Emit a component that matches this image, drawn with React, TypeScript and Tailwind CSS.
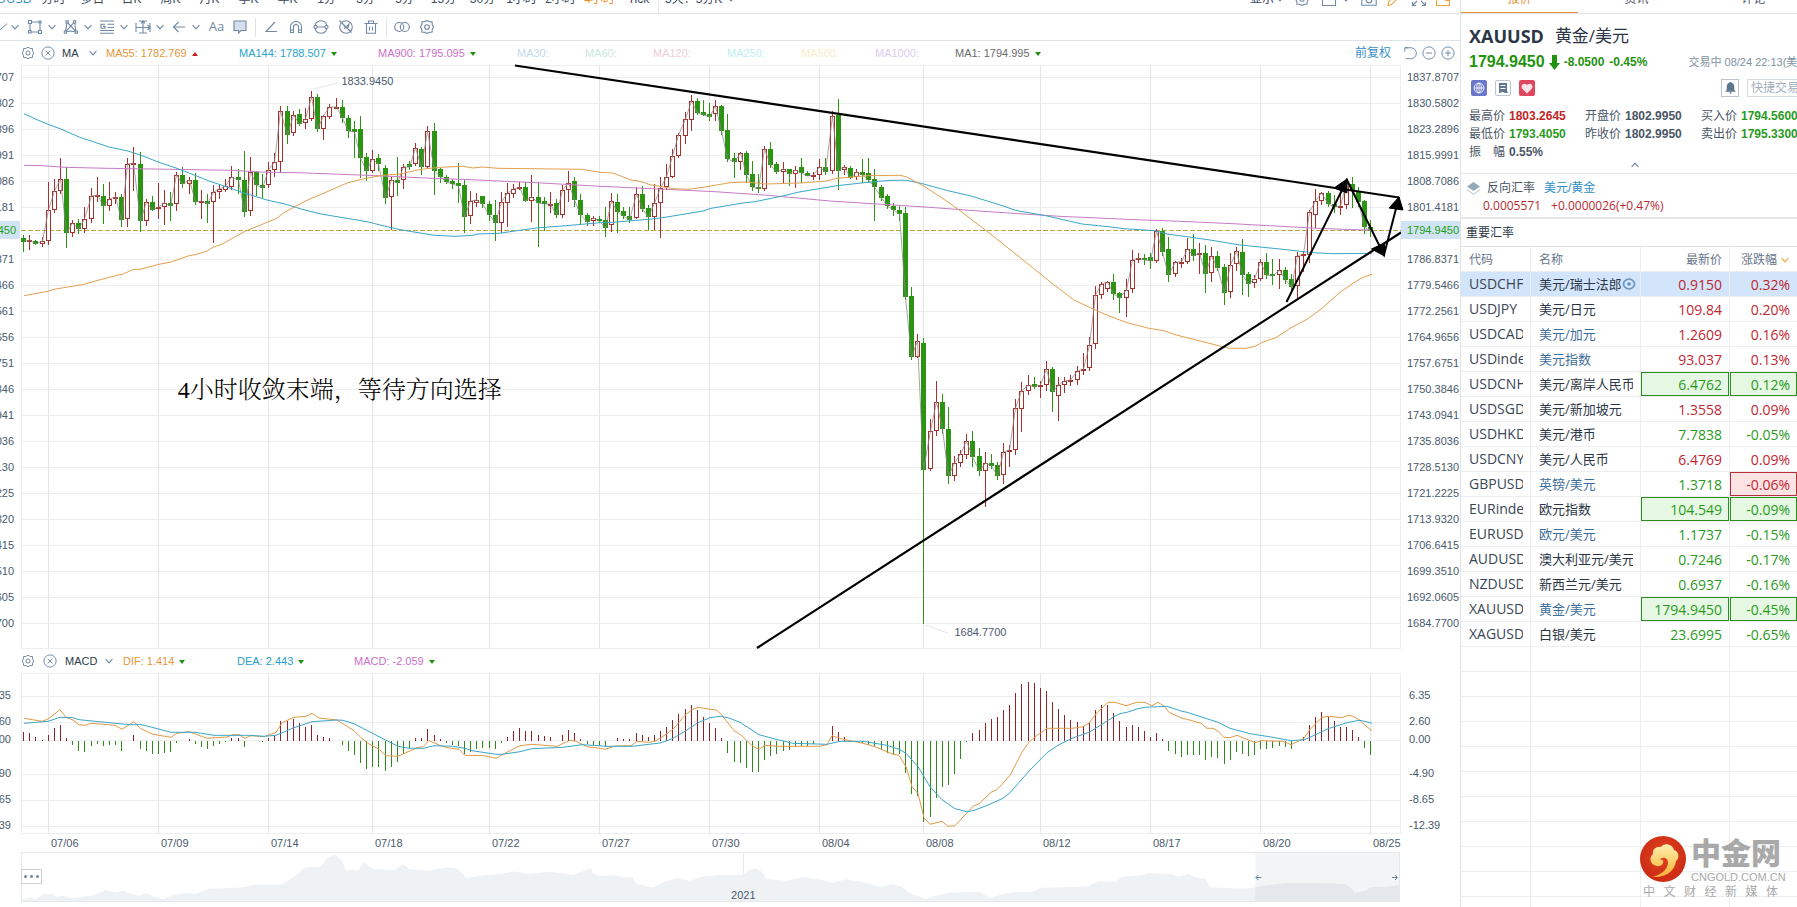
import React from "react";

/* ------------------------------------------------------------------ */
/* Chart data                                                          */
/* ------------------------------------------------------------------ */

// Each candle: direction (R rising, G falling), then high, body top, body bottom, low
// in thirds of a chart unit, measured downwards.
const CANDLES = `
G705,713,725,755 R706,720,727,750 G721,724,731,735 R711,724,731,740 R546,631,724,735 R536,573,631,639
R474,538,573,583 G502,538,700,743 R660,670,700,712 G657,670,686,703 R621,657,686,698 R563,589,658,669
R531,586,592,605 G553,588,617,671 R546,596,617,632 R575,592,598,613 G583,591,659,681 R474,493,658,681
R441,490,495,572 G455,492,664,695 R597,607,664,677 G589,606,629,632 R548,622,628,656 R570,610,622,674
G576,610,617,662 R516,526,613,632 G502,526,551,563 R532,541,553,583 G520,540,605,614 R570,602,607,656
G583,603,611,668 R556,577,607,728 R556,566,577,598 R537,558,571,577 R499,532,560,570 G507,532,541,581
G454,540,635,651 R472,515,632,647 G512,515,554,589 G523,554,563,594 R487,511,556,563 R458,487,511,530
R318,334,485,516 G318,334,404,431 R334,346,400,407 G327,343,371,377 R325,358,370,387 R273,292,358,362
G283,290,388,395 R344,349,388,419 R313,322,350,358 R294,321,323,328 G299,321,353,370 G346,353,392,413
G363,388,395,473 G348,388,473,533 G459,472,512,542 R450,478,514,520 G463,475,492,512 G495,503,594,613
R532,541,590,691 G471,541,548,589 R493,502,541,568 G483,492,500,510 R430,445,493,498 G442,448,500,524
R378,394,500,507 G369,393,512,585 G503,507,530,550 G524,530,545,551 G538,544,552,568 G489,550,557,608
G541,555,650,698 R573,604,647,672 R578,601,608,620 G589,589,612,624 G604,612,646,662 G600,645,669,722
R577,607,670,700 R548,580,610,681 R551,566,583,595 R547,562,563,570 G545,561,602,605 R525,590,602,665
G545,591,608,740 G592,603,612,692 R577,613,619,640 G597,610,645,655 R556,569,644,655 R513,548,569,605
G530,544,601,620 G583,601,644,673 G640,644,665,678 R649,655,664,677 G648,656,664,668 G622,660,683,711
R578,604,676,695 G582,605,635,699 G622,634,647,656 G620,647,660,669 R560,583,654,658 G559,583,626,635
G616,625,650,690 R553,610,650,691 R531,565,610,714 R493,532,560,571 R448,469,532,535 R400,405,469,475
R336,358,409,431 R286,304,361,393 G295,303,339,344 G300,337,344,347 G309,343,350,362 R300,319,343,362
G316,319,392,406 G342,391,476,485 G459,475,485,533 R457,460,487,510 G452,459,524,548 G484,522,562,572
G522,560,567,578 R438,448,566,574 G426,447,494,504 G486,492,517,523 R486,508,517,548 G506,508,521,557
R498,510,521,563 G475,502,520,548 G514,519,527,529 R516,525,530,540 R478,502,525,541 G475,502,515,524
R334,349,514,522 G297,346,512,570 R494,502,509,524 G499,503,533,538 R507,517,532,540 G478,517,524,549
G474,520,540,548 G507,538,562,662 G556,562,594,604 G583,588,619,627 G610,617,631,648 G617,630,641,663
G620,640,890,900 G862,888,1070,1080 R1001,1024,1070,1074 G1014,1029,1409,1871 R1257,1294,1408,1413
R1143,1207,1294,1307 G1182,1207,1286,1302 G1221,1287,1427,1452 R1368,1390,1427,1443 R1350,1363,1390,1400
R1302,1324,1366,1376 G1293,1323,1370,1400 G1344,1368,1412,1427 R1356,1390,1412,1521 G1362,1389,1397,1406
G1387,1395,1427,1440 R1329,1357,1426,1452 R1335,1351,1357,1400 R1198,1225,1351,1364 R1147,1174,1228,1295
R1125,1156,1174,1184 G1131,1153,1160,1167 R1144,1156,1161,1194 R1083,1108,1156,1174 G1101,1108,1177,1235
R1130,1156,1187,1262 R1130,1144,1156,1178 R1125,1141,1146,1157 R1098,1114,1141,1156 R1058,1108,1114,1124
R1012,1036,1105,1112 R858,886,1033,1046 R846,853,886,898 R844,847,868,877 G823,847,881,899 G876,880,895,938
R836,871,895,950 R750,780,868,880 R759,774,780,790 G762,775,780,794 G758,771,784,808 R688,693,784,788
G684,694,755,768 G710,748,825,846 R783,787,823,830 R773,786,793,805 R715,748,787,793 G702,747,767,782
R730,760,766,822 G736,760,822,880 R740,767,820,847 G754,767,803,812 G792,801,878,914 R760,796,877,895
R742,754,793,812 G717,757,825,885 G815,822,852,890 R825,838,850,865 R778,787,838,842 G760,787,825,838
G777,822,828,856 R778,811,826,868 G801,811,839,852 G823,838,860,875 R756,769,859,895 R753,763,769,815
R631,637,765,790 R568,604,646,684 R575,580,604,615 G574,580,613,622 G586,612,620,640 R586,617,622,645
R535,548,616,627 G531,552,570,623 G560,572,605,622 G600,603,682,702 G660,680,692,711`
  .trim()
  .split(/\s+/);

const MA55 =
  "24,887 48,874 54,868 84,853 98,841 117,826 122,823 134,808 140,808 159,793 171,786 189,767 195,764 207,753 214,740 221,734 245,694 276,656 285,636 306,602 325,578 337,562 348,548 364,536 383,526 400,522 421,508 440,502 463,499 473,504 482,501 498,505 582,508 600,517 613,519 631,540 640,544 650,554 673,566 688,568 703,562 730,548 747,546 765,552 801,549 826,543 837,535 868,527 900,526 906,530 925,560 944,598 960,632 987,694 1021,775 1052,850 1074,900 1095,930 1111,950 1128,969 1149,985 1164,992 1175,1004 1191,1016 1212,1032 1229,1045 1246,1045 1255,1039 1263,1026 1276,1013 1290,985 1307,958 1320,930 1340,877 1353,850 1363,832 1372,823";
const MA144 =
  "24,341 36,358 48,373 60,386 80,412 109,441 128,453 142,467 159,487 176,504 195,526 209,543 222,556 245,580 268,601 285,612 302,628 321,642 367,665 387,680 402,690 434,706 455,709 473,706 478,702 499,700 536,684 574,675 600,668 613,667 652,657 665,652 703,633 711,625 745,608 755,605 784,587 799,576 837,557 868,547 891,541 906,541 921,550 948,572 971,588 998,613 1017,632 1044,646 1059,656 1082,672 1109,680 1124,686 1155,692 1167,702 1187,710 1210,720 1240,735 1280,747 1313,758 1333,761 1372,760";
const MA900 =
  "24,496 42,497 65,502 107,505 153,507 230,511 268,517 298,518 367,526 398,530 432,535 471,539 536,548 600,559 665,568 715,575 768,586 830,603 925,621 983,634 1059,649 1136,659 1180,664 1233,671 1280,679 1317,685 1353,689 1372,690";

const DIF =
  "24,235 42,244 48,237 60,209 66,232 73,240 79,254 85,256 91,250 115,256 122,268 134,245 140,265 153,283 171,292 177,280 189,275 207,295 227,291 233,284 239,284 245,295 251,287 264,290 276,277 282,248 294,232 306,229 312,220 319,234 337,240 354,272 361,293 368,310 379,328 386,347 398,349 409,334 417,323 423,320 429,302 440,316 447,323 459,328 465,346 484,347 496,355 508,335 520,317 532,313 557,319 570,301 576,304 587,320 600,325 605,328 615,318 631,317 637,304 649,307 655,304 661,293 673,268 685,226 692,209 698,202 717,211 722,226 734,272 740,283 746,299 752,317 759,328 765,316 778,319 820,319 827,314 832,287 845,299 863,310 875,320 893,343 899,346 906,380 912,440 918,461 924,533 930,553 942,544 948,559 955,557 973,499 979,491 991,457 997,449 1010,406 1022,337 1028,310 1034,293 1047,265 1072,265 1082,261 1089,250 1097,218 1108,187 1115,187 1126,197 1137,187 1145,187 1152,197 1158,187 1164,198 1169,217 1182,235 1187,238 1201,250 1207,265 1213,265 1218,274 1224,292 1230,293 1237,286 1255,308 1261,302 1283,304 1291,314 1304,295 1310,268 1322,232 1328,229 1342,233 1348,226 1353,229 1359,239 1365,256 1372,272";
const DEA =
  "24,250 48,244 60,232 73,233 79,239 115,250 130,254 142,254 171,277 195,277 214,286 249,286 264,289 276,286 294,263 312,245 337,240 343,241 354,251 379,290 398,319 409,325 423,325 434,317 453,319 465,325 472,332 496,343 502,343 520,335 532,326 563,322 582,314 600,317 605,319 632,319 660,309 667,302 673,295 685,274 698,248 710,233 720,229 728,233 740,247 759,284 780,301 793,310 827,313 840,304 863,304 887,316 899,328 906,340 918,380 930,440 942,479 955,506 967,515 973,512 985,499 1003,475 1010,458 1028,397 1034,378 1047,338 1059,314 1072,295 1089,277 1102,253 1115,228 1120,221 1127,217 1138,206 1145,202 1167,199 1182,214 1187,217 1218,247 1230,265 1250,281 1273,292 1291,302 1304,299 1310,292 1328,266 1347,248 1359,241 1365,244 1372,250";
const BARS = [
  275, 280, 290, 299, 284, 265, 254, 295, 314, 332, 335, 317, 311, 317, 314, 315, 332, 302, 286, 326, 332, 341, 341, 338,
  335, 308, 302, 297, 311, 320, 326, 317, 311, 305, 295, 295, 320, 302, 302, 305, 295, 287, 243, 243, 237, 250, 260, 254,
  284, 292, 295, 302, 314, 332, 344, 368, 386, 380, 380, 392, 380, 365, 341, 323, 295, 295, 268, 284, 298, 308, 314, 319,
  341, 335, 326, 323, 323, 326, 308, 290, 274, 265, 274, 274, 284, 287, 290, 302, 286, 271, 280, 298, 311, 317, 317, 320,
  302, 295, 298, 298, 280, 284, 292, 286, 274, 262, 241, 223, 208, 196, 211, 232, 250, 265, 295, 338, 365, 368, 383, 395,
  395, 359, 347, 341, 332, 329, 320, 318, 318, 313, 302, 302, 257, 277, 290, 305, 305, 308, 314, 320, 326, 338, 341, 341,
  398, 461, 467, 545, 530, 473, 440, 434, 401, 356, 307, 280, 269, 250, 236, 232, 209, 196, 160, 133, 125, 129, 145, 154,
  187, 208, 226, 241, 247, 257, 247, 211, 196, 196, 220, 244, 262, 256, 262, 274, 290, 280, 298, 332, 341, 350, 344, 344,
  344, 359, 350, 353, 371, 359, 335, 341, 347, 344, 328, 326, 325, 318, 320, 326, 302, 290, 254, 230, 217, 230, 244, 262,
  260, 271, 290, 323, 344,
];
const OVERVIEW =
  "21,778 31,772 34,779 42,763 50,762 55,770 63,767 71,775 82,770 90,768 105,750 115,757 122,753 138,768 145,759 153,770 163,778 172,764 188,760 195,762 209,746 237,743 245,740 253,734 281,734 295,708 304,683 312,680 319,682 327,655 335,645 341,660 346,692 352,689 358,692 364,665 369,680 375,688 394,690 403,673 409,688 429,692 446,682 457,685 467,714 478,708 498,703 515,694 528,702 551,695 574,705 591,684 593,700 600,708 615,706 623,712 633,714 637,732 647,738 653,743 662,730 677,713 690,722 703,710 720,705 743,704 750,690 757,685 763,697 767,717 787,722 803,712 820,718 833,728 847,718 867,728 882,742 893,732 903,740 910,758 927,777 933,770 950,758 980,755 992,775 1000,765 1017,755 1033,757 1042,743 1067,742 1090,738 1100,724 1117,725 1123,710 1143,706 1150,700 1173,702 1180,710 1190,702 1197,712 1207,716 1212,742 1233,745 1253,745 1263,738 1290,728 1327,730 1348,733 1353,745 1357,758 1367,752 1373,742 1390,740 1401,735";

const xAt = (i: number) => Math.round(24.2 + i * 6.124) - 0.5;
const scale = (pts: string, offset: number) =>
  pts
    .split(" ")
    .map((p) => {
      const [x, y] = p.split(",").map(Number);
      return `${x},${(offset + y / 3).toFixed(1)}`;
    })
    .join(" ");

const DATES: [number, string][] = [
  [4, "07/06"],
  [22, "07/09"],
  [40, "07/14"],
  [57, "07/18"],
  [76, "07/22"],
  [94, "07/27"],
  [112, "07/30"],
  [130, "08/04"],
  [147, "08/08"],
  [166, "08/12"],
  [184, "08/17"],
  [202, "08/20"],
  [220, "08/25"],
];
const PRICES = [
  "1837.8707", "1830.5802", "1823.2896", "1815.9991", "1808.7086", "1801.4181", "", "1786.8371", "1779.5466",
  "1772.2561", "1764.9656", "1757.6751", "1750.3846", "1743.0941", "1735.8036", "1728.5130", "1721.2225",
  "1713.9320", "1706.6415", "1699.3510", "1692.0605", "1684.7700",
];
const MACD_TICKS: [number, string][] = [
  [23, "6.35"],
  [49, "2.60"],
  [67, "0.00"],
  [101, "-4.90"],
  [127, "-8.65"],
  [153, "-12.39"],
];

/* ------------------------------------------------------------------ */
/* Icons                                                               */
/* ------------------------------------------------------------------ */

type IconProps = { children: React.ReactNode; className?: string; size?: number };
function Icon({ children, className = "text-[#7189a5]", size = 16 }: IconProps) {
  return (
    <svg
      width={size}
      height={size}
      viewBox="0 0 16 16"
      fill="none"
      stroke="currentColor"
      strokeWidth="1.1"
      className={`shrink-0 ${className}`}
      aria-hidden="true"
    >
      {children}
    </svg>
  );
}
const Chevron = ({ className }: { className?: string }) => (
  <Icon size={10} className={className}>
    <path d="M2.500 5l5.500 6 5.500-6" strokeWidth="1.800" />
  </Icon>
);
const Gear = ({ size = 16 }: { size?: number }) => (
  <Icon size={size}>
    <path d="M5.600 2.800 8 1.400l2.400 1.400 2.700.1.100 2.700L14.600 8l-1.400 2.400-.1 2.700-2.700.1L8 14.600l-2.400-1.400-2.700-.1-.1-2.700L1.400 8l1.400-2.400.1-2.700z" strokeLinejoin="round" />
    <circle cx="8" cy="8" r="2.300" />
  </Icon>
);
const CloseCircle = () => (
  <Icon size={14}>
    <circle cx="8" cy="8" r="7" />
    <path d="M5.300 5.300l5.400 5.400M10.700 5.300l-5.400 5.400" />
  </Icon>
);
const Tri = ({ up = false }: { up?: boolean }) => (
  <svg width="6" height="4" viewBox="0 0 6 4" className="mt-px shrink-0" aria-hidden="true">
    {up ? <path d="M3 0l3 4H0z" fill="#c51f1f" /> : <path d="M0 0h6L3 4z" fill="#1f930f" />}
  </svg>
);

const DRAW_TOOLS: { name: string; icon: React.ReactNode }[] = [
  {
    name: "矩形",
    icon: (
      <Icon>
        <path d="M4.500 3h8.500v8.500M3 4.500V13h8.500" />
        <path d="M1.500 1.500h3v3h-3zM1.500 11.500h2.500v2.500H1.500zM11.500 11.500h3v3h-3zM12 2h2v2h-2z" fill="#fff" />
      </Icon>
    ),
  },
  {
    name: "形态",
    icon: (
      <Icon>
        <path d="M2.500 13L4 3l9 9.500L11.500 3 2.500 13l5-1 5.500 1" />
        <path d="M3 1.800h2.200V4H3zM10.500 1.800h2.200V4h-2.200zM1.300 12h2.200v2.200H1.300zM12.200 12h2.200v2.200h-2.200z" fill="#fff" />
      </Icon>
    ),
  },
  {
    name: "斐波那契",
    icon: (
      <Icon>
        <path d="M1 2h14M8.500 5.300H15M8.500 8.500H15M1 11.500h14M1 14.300h14M6 5.300H2v4h4V7.400H4" />
      </Icon>
    ),
  },
  {
    name: "测量",
    icon: (
      <Icon>
        <path d="M1 4v9M15 4v9M1 8.500h14M8 2v12M4 2h8M4 14h8M12.500 6l2.500 2.500-2.500 2.500M6 4.500L8 2l2 2.500" />
      </Icon>
    ),
  },
  {
    name: "箭头",
    icon: (
      <Icon>
        <path d="M14 8H2.500M7.500 3L2.500 8l5 5" />
      </Icon>
    ),
  },
];

const ACTION_TOOLS: { name: string; icon: React.ReactNode }[] = [
  { name: "角度", icon: <Icon><path d="M12 3L3 12.500h11" /></Icon> },
  {
    name: "磁吸",
    icon: (
      <Icon>
        <path d="M2.500 13.500V8a5.500 5.500 0 0 1 11 0v5.500H10.500V8a2.500 2.500 0 0 0-5 0v5.500zM2.500 11h3M10.500 11h3" />
      </Icon>
    ),
  },
  {
    name: "锁定",
    icon: (
      <Icon>
        <path d="M2.500 5A6.300 6.300 0 0 1 13.500 5M13.500 11A6.300 6.300 0 0 1 2.500 11M4 8h8M2.500 5v1.500M13.500 5v1.500M2.500 11V9.500M13.500 11V9.500" />
        <circle cx="2.500" cy="8" r="1.600" fill="#fff" />
        <circle cx="13.500" cy="8" r="1.600" fill="#fff" />
      </Icon>
    ),
  },
  {
    name: "隐藏",
    icon: (
      <Icon>
        <circle cx="8" cy="8" r="6.300" />
        <path d="M1.500 1.500l12 12M6 9.800L11 5l-1.200 4M5.500 6.200l3 3" />
      </Icon>
    ),
  },
  {
    name: "删除",
    icon: (
      <Icon>
        <path d="M1.500 4.500h13M5.500 4.500V2h5v2.500M3.500 4.500v9.800h9V4.500M6.500 7.500v4M9.500 7.500v4" />
      </Icon>
    ),
  },
];

/* ------------------------------------------------------------------ */
/* Header bars                                                         */
/* ------------------------------------------------------------------ */

const PERIODS = [
  "分时", "多日", "日K", "周K", "月K", "季K", "年K", "1分", "3分", "5分", "15分", "30分", "1小时", "2小时", "4小时", "Tick",
];

function PeriodBar() {
  return (
    <nav className="flex h-[14px] flex-col justify-end overflow-hidden border-b border-[#dfe3e8] text-[12px] text-[#3c4a5c]">
      <div className="flex h-[28px] shrink-0 items-center whitespace-nowrap">
        <div className="mr-[2px] flex w-[32px] shrink-0 justify-end overflow-hidden font-['Open_Sans'] text-[13px] text-[#3a8fc0]">
          <span>XAUUSD</span>
        </div>
        {PERIODS.map((p) => (
          <button key={p} type="button" className={`w-[39px] shrink-0 ${p === "4小时" ? "text-[#ee8a1d]" : ""}`}>
            {p}
          </button>
        ))}
        <div className="mr-[6px] h-full w-px bg-[#e3e6ea]" />
        <button type="button" className="flex items-center gap-1">
          5天：5分K <Chevron />
        </button>
        <div className="ml-auto flex items-center pr-[9px]">
          <button type="button" className="mr-[9px] flex items-center gap-px">
            显示 <Chevron />
          </button>
          <button type="button" aria-label="设置" className="mr-[11px]">
            <Gear />
          </button>
          <button type="button" aria-label="布局" className="mr-[10px] flex items-center gap-1">
            <Icon><path d="M1.500 1.500h13v13h-13z" /></Icon>
            <Chevron />
          </button>
          <button type="button" aria-label="截图" className="mr-[9px]">
            <Icon><path d="M.8 4h3.500L6 2h4l1.700 2h3.500v10.300H.8z" /><circle cx="8" cy="9" r="2.800" /></Icon>
          </button>
          <button type="button" aria-label="画线" className="mr-[9px]">
            <Icon className="text-[#f0a43a]"><path d="M2 14.500l.8-4L11 2l3 3-8.500 8.500z" /></Icon>
          </button>
          <button type="button" aria-label="全屏" className="mr-[8px]">
            <Icon><path d="M1.500 5V1.500H5M11 1.500h3.500V5M14.500 11v3.500H11M5 14.500H1.500V11M2 14l4-4M14 14l-4-4" /></Icon>
          </button>
          <button type="button" aria-label="侧栏">
            <Icon className="text-[#f0a43a]"><path d="M1.500 1.500h13v13h-13zM10.500 1.500v8h4" /></Icon>
          </button>
        </div>
      </div>
    </nav>
  );
}

function DrawBar() {
  return (
    <div className="flex h-[27px] items-center border-b border-[#dfe3e8]">
      <button type="button" aria-label="线段" className="flex w-[27px] items-center gap-[2px]">
        <Icon size={8}><path d="M0 14L14 1" strokeWidth="2" /></Icon>
        <Chevron />
      </button>
      <div className="flex gap-[6px]">
        {DRAW_TOOLS.map((t) => (
          <button key={t.name} type="button" aria-label={t.name} className="flex w-[30px] items-center justify-between">
            {t.icon}
            <Chevron />
          </button>
        ))}
      </div>
      <button type="button" className="ml-[2px] w-[27px] text-center font-['Open_Sans'] text-[13px] text-[#7189a5]">
        Aa
      </button>
      <button type="button" aria-label="批注" className="ml-[2px]">
        <Icon><path d="M2 2h12v9.500H9L6.500 14v-2.500H2z" fill="#d5e0ee" /></Icon>
      </button>
      <div className="mx-[7px] h-[19px] w-px bg-[#dfe3e8]" />
      <div className="flex gap-[9px]">
        {ACTION_TOOLS.map((t) => (
          <button key={t.name} type="button" aria-label={t.name}>
            {t.icon}
          </button>
        ))}
      </div>
      <div className="mx-[7px] h-[19px] w-px bg-[#dfe3e8]" />
      <div className="flex gap-[9px]">
        <button type="button" aria-label="叠加">
          <Icon><circle cx="5.200" cy="8" r="4.500" /><circle cx="10.800" cy="8" r="4.500" /></Icon>
        </button>
        <button type="button" aria-label="画线设置">
          <Gear />
        </button>
      </div>
    </div>
  );
}

const LEGEND: { text: string; cls: string; mark?: "up" | "down" }[] = [
  { text: "MA55: 1782.769", cls: "w-[133px] text-[#e8953a]", mark: "up" },
  { text: "MA144: 1788.507", cls: "w-[139px] text-[#2aa3c9]", mark: "down" },
  { text: "MA900: 1795.095", cls: "w-[139px] text-[#cc6fc9]", mark: "down" },
  { text: "MA30:", cls: "w-[68px] text-[#c3d9ee]" },
  { text: "MA60:", cls: "w-[68px] text-[#c9e8dc]" },
  { text: "MA120:", cls: "w-[74px] text-[#f0cdd2]" },
  { text: "MA250:", cls: "w-[74px] text-[#bdeef4]" },
  { text: "MA500:", cls: "w-[74px] text-[#f8edcb]" },
  { text: "MA1000:", cls: "w-[80px] text-[#dccbee]" },
  { text: "MA1: 1794.995", cls: "w-[90px] text-[#6b6b6b]", mark: "down" },
];

function MaLegend() {
  return (
    <div className="flex h-[24px] items-center pl-[21px] text-[11px] whitespace-nowrap">
      <button type="button" aria-label="MA 设置"><Gear size={14} /></button>
      <button type="button" aria-label="关闭 MA" className="ml-[6px]"><CloseCircle /></button>
      <button type="button" className="ml-[7px] flex w-[44px] items-center gap-[9px] text-[#2d3a4a]">
        MA <Chevron />
      </button>
      {LEGEND.map((l) => (
        <span key={l.text} className={`flex shrink-0 items-center gap-[5px] ${l.cls}`}>
          {l.text}
          {l.mark && <Tri up={l.mark === "up"} />}
        </span>
      ))}
      <div className="ml-auto flex items-center gap-[5px] pr-[5px]">
        <button type="button" className="mr-[7px] text-[12px] text-[#3a8fc8]">前复权</button>
        <button type="button" aria-label="重置">
          <Icon size={14}><path d="M2 2h7a6 6 0 0 1 0 12.500H3M2 2v4.500M2 2l4 .100" /></Icon>
        </button>
        <button type="button" aria-label="缩小">
          <Icon size={14}><circle cx="8" cy="8" r="7" /><path d="M4.500 8h7" /></Icon>
        </button>
        <button type="button" aria-label="放大">
          <Icon size={14}><circle cx="8" cy="8" r="7" /><path d="M4.500 8h7M8 4.500v7" /></Icon>
        </button>
      </div>
    </div>
  );
}

/* ------------------------------------------------------------------ */
/* Charts                                                              */
/* ------------------------------------------------------------------ */

function PriceAxis({ side }: { side: "left" | "right" }) {
  const left = side === "left";
  return (
    <div
      className={`relative flex shrink-0 flex-col text-[11px] text-[#4a5a6c] ${
        left ? "w-[21px] items-end overflow-hidden pr-[7px]" : "w-[59px] items-start pl-[6px]"
      }`}
    >
      {PRICES.map((p, i) => (
        <span key={i} className="-mt-px mb-px flex h-[26px] shrink-0 items-center">{p}</span>
      ))}
      <span
        className={`absolute top-[156px] flex h-[18px] items-center bg-[#d0e4f6] text-[#1f9e14] ${
          left ? "right-px justify-end pr-[4px] pl-4" : "inset-x-0 pl-[6px]"
        }`}
      >
        1794.9450
      </span>
    </div>
  );
}

function PricePlot() {
  const bodies = CANDLES.map((c, i) => {
    const up = c[0] === "R";
    const [h, t, b, l] = c.slice(1).split(",").map((n) => Math.round(Number(n) / 3));
    return { up, h, t, b: Math.max(b, t + 1), l, x: xAt(i) };
  });
  const closes = bodies.map((k) => `${k.x},${k.up ? k.t : k.b}`).join(" ");
  return (
    <div className="relative min-w-0 flex-1">
      <svg className="block h-[584px] w-full overflow-visible" viewBox="21 65 1380 584" preserveAspectRatio="none" role="img" aria-label="XAUUSD K线图">
        <g stroke="#eceeef" strokeWidth="1" shapeRendering="crispEdges">
          {PRICES.map((_, i) => (
            <path key={i} d={`M21 ${77.5 + i * 26}H1401`} />
          ))}
          <path d="M21 65.500H1401M21 648.500H1401M21.500 65V649M1400.500 65V649" />
          {DATES.map(([i]) => (
            <path key={i} d={`M${xAt(i)} 65V649`} stroke="#e3e5e7" />
          ))}
        </g>
        <path d="M21 230.500H1401" stroke="#b9a545" strokeDasharray="5 2" shapeRendering="crispEdges" />
        <g shapeRendering="crispEdges">
          {bodies.map((k, i) =>
            k.up ? (
              <g key={i} stroke="#a8302c" fill="#fff">
                <path d={`M${k.x} ${k.h}V${k.l}`} />
                <rect x={k.x - 2} y={k.t + 0.5} width="4" height={Math.max(k.b - k.t - 1, 1)} />
              </g>
            ) : (
              <g key={i} stroke="#2c9413" fill="#2c9413">
                <path d={`M${k.x} ${k.h}V${k.l}`} />
                <rect x={k.x - 2} y={k.t + 0.5} width="4" height={Math.max(k.b - k.t - 1, 1)} />
              </g>
            ),
          )}
        </g>
        <g fill="none" strokeWidth="1">
          <polyline points={closes} stroke="#8b8488" strokeOpacity=".75" />
          <polyline points={scale(MA900, 0)} stroke="#c77cc6" />
          <polyline points={scale(MA144, 0)} stroke="#3ba6c8" />
          <polyline points={scale(MA55, 0)} stroke="#e2a050" />
          <path d="M313 89l25-6M925 625l23 8" stroke="#e3e6ea" />
        </g>
        <g stroke="#000" strokeWidth="2" fill="none">
          <path d="M515 65.500L1399 197.500M757 648L1401 232.500" strokeWidth="2.200" />
          <path d="M1286.500 302L1347 180l37 75 15-58" />
        </g>
        <path d="M1347 179l-13 9 13 5zM1384.500 256l-13-7 13-6zM1399 197l-10 11 14 2z" fill="#000" stroke="#000" />
      </svg>
      <span className="absolute top-[8px] left-[23%] ml-[3px] text-[11px] text-[#4a5a6c]">1833.9450</span>
      <span className="absolute top-[559px] left-[68%] -ml-[5px] text-[11px] text-[#4a5a6c]">1684.7700</span>
      <p className="absolute top-[307px] left-[11%] ml-[5px] font-['Liberation_Serif','Noto_Serif_CJK_SC','Noto_Sans_CJK_SC',serif] text-[24px] font-light whitespace-nowrap text-black">
        4小时收敛末端，等待方向选择
      </p>
    </div>
  );
}

function MacdHeader() {
  return (
    <div className="flex h-[24px] items-center pl-[21px] text-[11px] whitespace-nowrap">
      <button type="button" aria-label="MACD 设置"><Gear size={14} /></button>
      <button type="button" aria-label="关闭 MACD" className="ml-[8px]"><CloseCircle /></button>
      <button type="button" className="ml-[8px] flex w-[58px] items-center gap-[7px] text-[#2d3a4a]">
        MACD <Chevron />
      </button>
      <span className="flex w-[114px] items-center gap-[5px] text-[#e8953a]">DIF: 1.414 <Tri /></span>
      <span className="flex w-[117px] items-center gap-[5px] text-[#2a9fc9]">DEA: 2.443 <Tri /></span>
      <span className="flex items-center gap-[5px] text-[#cc6fc9]">MACD: -2.059 <Tri /></span>
    </div>
  );
}

function MacdAxis({ side }: { side: "left" | "right" }) {
  const left = side === "left";
  return (
    <div className={`relative shrink-0 overflow-hidden text-[11px] leading-[16px] text-[#4a5a6c] ${left ? "w-[21px]" : "w-[59px]"}`}>
      {MACD_TICKS.map(([y, t]) => (
        <span key={t} className={`absolute ${left ? "right-[10px]" : "left-[8px]"}`} style={{ top: y - 9 }}>
          {t}
        </span>
      ))}
    </div>
  );
}

function MacdPlot() {
  return (
    <div className="min-w-0 flex-1">
      <svg className="block h-[161px] w-full" viewBox="21 673 1380 161" preserveAspectRatio="none" role="img" aria-label="MACD">
        <g stroke="#eceeef" shapeRendering="crispEdges">
          {MACD_TICKS.map(([y]) => (
            <path key={y} d={`M21 ${673.5 + y}H1401`} />
          ))}
          <path d="M21 673.500H1401M21 833.500H1401M21.500 673V834M1400.500 673V834" />
          {DATES.map(([i]) => (
            <path key={i} d={`M${xAt(i)} 673V834`} stroke="#e3e5e7" />
          ))}
        </g>
        <g shapeRendering="crispEdges">
          {BARS.map((v, i) => (
            <path key={i} d={`M${xAt(i)} 740.500V${640 + v / 3}`} stroke={v < 302 ? "#8f2328" : "#2f8a1c"} />
          ))}
        </g>
        <polyline points={scale(DIF, 640)} fill="none" stroke="#e29a48" />
        <polyline points={scale(DEA, 640)} fill="none" stroke="#3ba6c8" />
      </svg>
    </div>
  );
}

function DateAxis() {
  return (
    <div className="relative mr-[59px] ml-[21px] h-[18px] text-[11px] leading-[18px] text-[#4a5a6c]">
      {DATES.map(([i, d]) => (
        <span key={d} className="absolute top-0 pl-[3px]" style={{ left: `${((xAt(i) - 21.5) / 1380) * 100}%` }}>
          {d}
        </span>
      ))}
    </div>
  );
}

function Overview() {
  return (
    <div className="relative mr-[60px] ml-[21px] border border-[#e6e8eb]">
      <svg className="block h-[48px] w-full" viewBox="21 853 1380 48" preserveAspectRatio="none" aria-hidden="true">
        <path d="M744 853V901" stroke="#e6e8eb" />
        <polygon points={`21,902 ${scale(OVERVIEW, 640)} 1401,902`} fill="#eff2f5" />
        <rect x="1257" y="853" width="144" height="48" fill="#8794a3" fillOpacity=".1" />
        <path d="M1263 877.500h-5m2-2.500l-2.500 2.500 2.500 2.500M1394 877.500h5m-2-2.500l2.500 2.500-2.500 2.500" fill="none" stroke="#5f7f9f" />
      </svg>
      <span className="absolute -bottom-[2px] left-[52%] -ml-[7px] text-[11px] text-[#4a5a6c]">2021</span>
      <button
        type="button"
        aria-label="更多"
        className="absolute top-[16px] -left-px flex h-[15px] w-[21px] items-center justify-center gap-[3px] border border-[#cdd2d8] bg-white"
      >
        <i className="size-[3px] rounded-full bg-[#75879a]" />
        <i className="size-[3px] rounded-full bg-[#75879a]" />
        <i className="size-[3px] rounded-full bg-[#75879a]" />
      </button>
    </div>
  );
}

/* ------------------------------------------------------------------ */
/* Quote panel                                                         */
/* ------------------------------------------------------------------ */

const GREEN = "text-[#2a9a1e]";
const RED = "text-[#bf2630]";

const STATS: [string, string, string][] = [
  ["最高价", "1803.2645", "text-[#c02626]"],
  ["开盘价", "1802.9950", "text-[#4a5666]"],
  ["买入价", "1794.5600", GREEN],
  ["最低价", "1793.4050", GREEN],
  ["昨收价", "1802.9950", "text-[#4a5666]"],
  ["卖出价", "1795.3300", GREEN],
  ["振　幅", "0.55%", "text-[#4a5666]"],
];

type Row = { code: string; name: string; link?: boolean; price: string; pc: "r" | "g"; chg: string; cc: "r" | "g"; pb?: boolean; cb?: boolean };
const ROWS: Row[] = [
  { code: "USDCHF", name: "美元/瑞士法郎", price: "0.9150", pc: "r", chg: "0.32%", cc: "r" },
  { code: "USDJPY", name: "美元/日元", price: "109.84", pc: "r", chg: "0.20%", cc: "r" },
  { code: "USDCAD", name: "美元/加元", link: true, price: "1.2609", pc: "r", chg: "0.16%", cc: "r" },
  { code: "USDindex", name: "美元指数", link: true, price: "93.037", pc: "r", chg: "0.13%", cc: "r" },
  { code: "USDCNH", name: "美元/离岸人民币", price: "6.4762", pc: "g", chg: "0.12%", cc: "g", pb: true, cb: true },
  { code: "USDSGD", name: "美元/新加坡元", price: "1.3558", pc: "r", chg: "0.09%", cc: "r" },
  { code: "USDHKD", name: "美元/港币", price: "7.7838", pc: "g", chg: "-0.05%", cc: "g" },
  { code: "USDCNY", name: "美元/人民币", price: "6.4769", pc: "r", chg: "0.09%", cc: "r" },
  { code: "GBPUSD", name: "英镑/美元", link: true, price: "1.3718", pc: "g", chg: "-0.06%", cc: "r", cb: true },
  { code: "EURindex", name: "欧元指数", price: "104.549", pc: "g", chg: "-0.09%", cc: "g", pb: true, cb: true },
  { code: "EURUSD", name: "欧元/美元", link: true, price: "1.1737", pc: "g", chg: "-0.15%", cc: "g" },
  { code: "AUDUSD", name: "澳大利亚元/美元", price: "0.7246", pc: "g", chg: "-0.17%", cc: "g" },
  { code: "NZDUSD", name: "新西兰元/美元", price: "0.6937", pc: "g", chg: "-0.16%", cc: "g" },
  { code: "XAUUSD", name: "黄金/美元", link: true, price: "1794.9450", pc: "g", chg: "-0.45%", cc: "g", pb: true, cb: true },
  { code: "XAGUSD", name: "白银/美元", price: "23.6995", pc: "g", chg: "-0.65%", cc: "g" },
];

function ValueCell({ text, color, boxed, last }: { text: string; color: "r" | "g"; boxed?: boolean; last?: boolean }) {
  const box = boxed
    ? color === "r"
      ? "border-[#b5323a] bg-[#fde3e4]"
      : "border-[#2a8f1e] bg-[#e6f8e3]"
    : "border-transparent";
  return (
    <td className={`border-b border-[#eceef1] p-0 ${last ? "" : "border-r"}`}>
      <div className={`flex h-[24px] items-center justify-end border pr-[6px] ${box} ${color === "r" ? RED : GREEN}`}>{text}</div>
    </td>
  );
}

function RatesTable() {
  const th = "h-[25px] border-b border-[#eceef1] p-0 pt-[2px] text-[12px] font-normal text-[#66758a]";
  return (
    <table className="w-full table-fixed border-separate border-spacing-0 font-['Open_Sans','Noto_Sans_CJK_SC',sans-serif] text-[14px]">
      <colgroup>
        <col className="w-[70px]" />
        <col className="w-[110px]" />
        <col className="w-[89px]" />
        <col />
      </colgroup>
      <thead>
        <tr>
          <th className={`${th} border-r pl-[8px] text-left`}>代码</th>
          <th className={`${th} border-r pl-[8px] text-left`}>名称</th>
          <th className={`${th} border-r pr-[7px] text-right`}>最新价</th>
          <th className={`${th} text-right`}>
            <button type="button" className="inline-flex items-center gap-[3px] pr-[7px]">
              涨跌幅 <Chevron className="text-[#f0a43a]" />
            </button>
          </th>
        </tr>
      </thead>
      <tbody>
        {ROWS.map((r, i) => (
          <tr key={r.code} className={i === 0 ? "bg-[#d2e5fb]" : ""}>
            <td className="h-[25px] border-r border-b border-[#eceef1] p-0 pr-[7px] pl-[8px] text-[#3a4656]">
              <div className="overflow-hidden leading-[24px] whitespace-nowrap">{r.code}</div>
            </td>
            <td className={`border-r border-b border-[#eceef1] p-0 pr-[7px] pl-[8px] text-[13px] ${r.link ? "text-[#3f6e9c]" : "text-[#2b3646]"}`}>
              <div className="relative">
                <div className="h-[24px] overflow-hidden leading-[24px] whitespace-nowrap">{r.name}</div>
                {i === 0 && (
                  <svg viewBox="0 0 14 12" className="absolute top-[6px] -right-[3px] h-[12px] w-[14px]" aria-hidden="true">
                    <ellipse cx="7" cy="6" rx="5.500" ry="4.800" fill="#d2e5fb" stroke="#6f97bd" strokeWidth="1.800" />
                    <circle cx="7" cy="6" r="1.800" fill="#5d8fbd" />
                  </svg>
                )}
              </div>
            </td>
            <ValueCell text={r.price} color={r.pc} boxed={r.pb} />
            <ValueCell text={r.chg} color={r.cc} boxed={r.cb} last />
          </tr>
        ))}
        {Array.from({ length: 11 }, (_, i) => (
          <tr key={i}>
            <td className="h-[25px] border-r border-b border-[#eceef1]" />
            <td className="border-r border-b border-[#eceef1]" />
            <td className="border-r border-b border-[#eceef1]" />
            <td className="border-b border-[#eceef1]" />
          </tr>
        ))}
      </tbody>
    </table>
  );
}

function Watermark() {
  return (
    <div className="absolute right-[14px] bottom-[8px] w-[143px] text-[#a9a9a9]">
      <div className="flex items-start gap-[5px]">
        <svg viewBox="0 0 46 46" className="size-[46px] shrink-0" aria-hidden="true">
          <defs>
            <radialGradient id="disc" cx=".5" cy=".4" r=".6">
              <stop offset="0" stopColor="#e0421f" />
              <stop offset="1" stopColor="#cb2a14" />
            </radialGradient>
            <linearGradient id="gold" x1="0" y1="0" x2="0" y2="1">
              <stop offset="0" stopColor="#fff0b0" />
              <stop offset="1" stopColor="#fbb033" />
            </linearGradient>
          </defs>
          <circle cx="23" cy="23" r="23" fill="url(#disc)" />
          <path
            d="M12 41C20 39 27 35 28 27c.5-5-6-7-8-3 3-1 4 1 3 3-1.500 3.500-6 4-9 2-4-2-5-8-1-11-1-5 4-8 8-7 3-5 12-3 13 3 5 1 6 8 2 11-1 9-9 17-24 16z"
            fill="url(#gold)"
          />
        </svg>
        <div className="mt-[2px]">
          <div className="text-[30px] leading-[32px] font-black whitespace-nowrap">中金网</div>
          <div className="text-[11px] leading-[14px]">CNGOLD.COM.CN</div>
        </div>
      </div>
      <div className="mt-[1px] flex justify-between pr-[5px] pl-[3px] text-[12px] leading-[14px]">
        {[..."中文财经新媒体"].map((c) => (
          <span key={c}>{c}</span>
        ))}
      </div>
    </div>
  );
}

function QuotePanel() {
  return (
    <aside className="relative w-[337px] shrink-0 overflow-hidden border-l border-[#dfe3e8]">
      <div className="w-[351px]">
        <div className="flex h-[14px] flex-col justify-end overflow-hidden border-b border-[#dfe3e8]">
          <div className="grid h-[28px] shrink-0 grid-cols-3 text-[12px] text-[#4a5a6c]">
            <button type="button" className="border-b border-[#e8953a] text-[#e8953a]">报价</button>
            <button type="button">资讯</button>
            <button type="button">评论</button>
          </div>
        </div>
        <div className="h-[159px] pl-[8px] text-[12px]">
          <h1 className="flex h-[28px] items-center gap-[11px] pt-[16px] font-['Open_Sans','Noto_Sans_CJK_SC',sans-serif] text-[18px] text-[#2b3646]">
            <b>XAUUSD</b>
            <span className="text-[17px]">黄金/美元</span>
          </h1>
          <div className="mt-[10px] flex h-[20px] items-center text-[#1f930f]">
            <b className="text-[16px]">1794.9450</b>
            <svg width="11" height="15" viewBox="0 0 11 15" className="mx-[4px]" aria-hidden="true">
              <path d="M3 0h5v8h3l-5.500 7L0 8h3z" fill="#1f930f" />
            </svg>
            <b>-8.0500</b>
            <b className="ml-[5px]">-0.45%</b>
            <span className="ml-auto text-[11px] whitespace-nowrap text-[#8291a3]">交易中 08/24 22:13(美东)</span>
          </div>
          <div className="mt-[7px] flex h-[18px] items-center gap-[8px] pl-[2px]">
            <button type="button" aria-label="网站" className="flex size-[16px] items-center justify-center rounded-[2px] bg-[#6a78cc]">
              <Icon size={12} className="text-white">
                <circle cx="8" cy="8" r="6.500" /><ellipse cx="8" cy="8" rx="3" ry="6.500" /><path d="M1.500 8h13M8 1.500v13" />
              </Icon>
            </button>
            <button type="button" aria-label="笔记" className="flex size-[16px] items-center justify-center rounded-[2px] border border-[#b9c4d0]">
              <svg width="10" height="12" viewBox="0 0 10 12" aria-hidden="true">
                <path d="M1 1h8v8l1 2H7l-2-1-4 1z" fill="#5f7890" /><path d="M2.500 3.500h5M2.500 6.500h5" stroke="#fff" />
              </svg>
            </button>
            <button type="button" aria-label="收藏" className="flex size-[16px] items-center justify-center rounded-[2px] bg-[#e0475f]">
              <svg width="12" height="11" viewBox="0 0 12 11" aria-hidden="true">
                <path d="M6 10.500L1 5.500C-1 2 3.500-1 6 2c2.500-3 7 0 5 3.500z" fill="#fde3e8" />
              </svg>
            </button>
            <button type="button" aria-label="提醒" className="ml-auto flex size-[18px] items-center justify-center border border-[#b9c4d0]">
              <svg width="11" height="12" viewBox="0 0 11 12" aria-hidden="true">
                <path d="M5.500 0C8 .5 9.300 2.500 9.300 5v3l1.500 1.700H.2L1.700 8V5C1.700 2.500 3 .5 5.500 0zM4 10.300h3L5.500 12z" fill="#5f7890" />
              </svg>
            </button>
            <button type="button" className="flex h-[18px] w-[65px] items-center border border-[#d5dbe2] pl-[3px] whitespace-nowrap text-[#a4afbb]">
              快捷交易
            </button>
          </div>
          <dl className="mt-[10px] grid grid-cols-[116px_116px_116px] whitespace-nowrap">
            {STATS.map(([k, v, c]) => (
              <div key={k} className="flex h-[18px] items-center gap-[4px]">
                <dt className="text-[#4a5666]">{k}</dt>
                <dd className={`font-bold ${c}`}>{v}</dd>
              </div>
            ))}
          </dl>
          <div className="-mt-[1px] flex w-[332px] justify-center">
            <button type="button" aria-label="收起" className="flex">
              <Chevron className="rotate-180 text-[#7189a5]" />
            </button>
          </div>
        </div>
        <div className="h-[46px] border-t border-b-2 border-[#e4e6e8] pt-[6px] pl-[6px] text-[12px] leading-[17px]">
          <div className="flex items-center">
            <svg width="13" height="13" viewBox="0 0 13 13" aria-hidden="true">
              <path d="M6.500 0L13 4.500 6.500 9 0 4.500z" fill="#93aab9" /><path d="M0 7l6.500 4.500L13 7v1.500L6.500 13 0 8.500z" fill="#c9d4dc" />
            </svg>
            <span className="ml-[7px] text-[#4a5666]">反向汇率</span>
            <a href="#inverse" className="ml-[9px] text-[#2f8fc6]">美元/黄金</a>
          </div>
          <div className="flex gap-[10px] pl-[16px] font-['Open_Sans'] text-[#b82a30]">
            <span>0.0005571</span>
            <span>+0.0000026(+0.47%)</span>
          </div>
        </div>
        <h2 className="h-[28px] border-b border-[#dfe3e8] pl-[5px] text-[12px] leading-[28px] text-[#2b3646]">重要汇率</h2>
      </div>
      <RatesTable />
      <Watermark />
    </aside>
  );
}

export default function App() {
  return (
    <div className="flex h-screen overflow-hidden bg-white font-['Liberation_Sans','Noto_Sans_CJK_SC',sans-serif]">
      <main className="flex min-w-0 flex-1 flex-col">
        <PeriodBar />
        <DrawBar />
        <MaLegend />
        <section className="flex h-[584px]">
          <PriceAxis side="left" />
          <PricePlot />
          <PriceAxis side="right" />
        </section>
        <MacdHeader />
        <section className="flex h-[161px]">
          <MacdAxis side="left" />
          <MacdPlot />
          <MacdAxis side="right" />
        </section>
        <DateAxis />
        <Overview />
      </main>
      <QuotePanel />
    </div>
  );
}
